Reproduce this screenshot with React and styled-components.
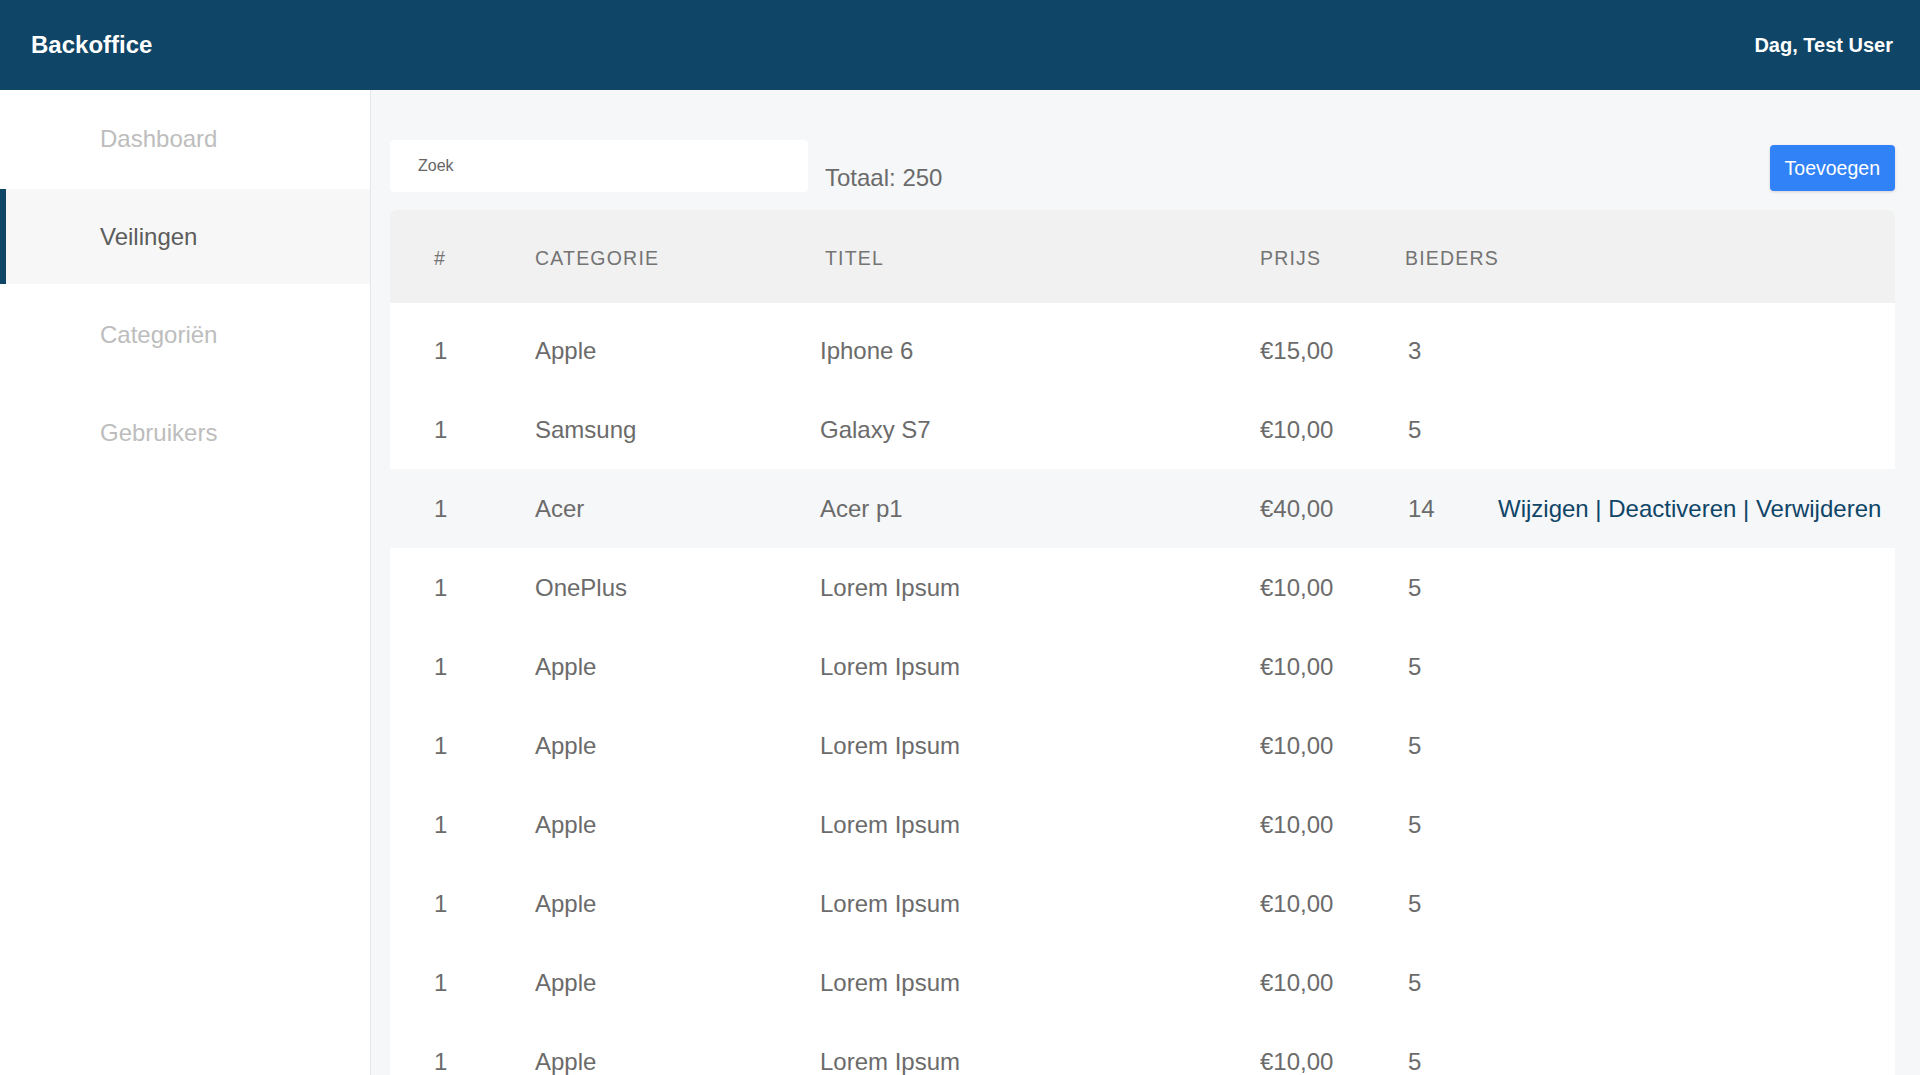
import styled, { createGlobalStyle } from "styled-components";

const GlobalStyle = createGlobalStyle`
  html, body {
    margin: 0;
    padding: 0;
  }
  body {
    font-family: "Liberation Sans", Arial, sans-serif;
    background: #f6f7f9;
  }
  * {
    box-sizing: border-box;
  }
`;

const menuItems = ["Dashboard", "Veilingen", "Categoriën", "Gebruikers"];

const auctions = [
  { id: 1, category: "Apple", title: "Iphone 6", price: "€15,00", bidders: 3 },
  { id: 1, category: "Samsung", title: "Galaxy S7", price: "€10,00", bidders: 5 },
  { id: 1, category: "Acer", title: "Acer p1", price: "€40,00", bidders: 14, hover: true },
  { id: 1, category: "OnePlus", title: "Lorem Ipsum", price: "€10,00", bidders: 5 },
  { id: 1, category: "Apple", title: "Lorem Ipsum", price: "€10,00", bidders: 5 },
  { id: 1, category: "Apple", title: "Lorem Ipsum", price: "€10,00", bidders: 5 },
  { id: 1, category: "Apple", title: "Lorem Ipsum", price: "€10,00", bidders: 5 },
  { id: 1, category: "Apple", title: "Lorem Ipsum", price: "€10,00", bidders: 5 },
  { id: 1, category: "Apple", title: "Lorem Ipsum", price: "€10,00", bidders: 5 },
  { id: 1, category: "Apple", title: "Lorem Ipsum", price: "€10,00", bidders: 5 },
];

function App() {
  return (
    <>
      <GlobalStyle />
      <Page>
        <TopBar>
          <Brand>Backoffice</Brand>
          <Greeting>Dag, Test User</Greeting>
        </TopBar>
        <Body>
          <Sidebar>
            {menuItems.map((item) => (
              <MenuItem key={item} $active={item === "Veilingen"}>
                {item}
              </MenuItem>
            ))}
          </Sidebar>
          <Main>
            <Toolbar>
              <Search placeholder="Zoek" />
              <Total>Totaal: 250</Total>
              <AddButton>Toevoegen</AddButton>
            </Toolbar>
            <Table>
              <HeadRow>
                <HeadCell>#</HeadCell>
                <HeadCell>Categorie</HeadCell>
                <HeadCell $shift={5}>Titel</HeadCell>
                <HeadCell>Prijs</HeadCell>
                <HeadCell $shift={-3}>Bieders</HeadCell>
                <HeadCell />
              </HeadRow>
              <Rows>
                {auctions.map((a, i) => (
                  <Row key={i} $hover={a.hover}>
                    <Cell>{a.id}</Cell>
                    <Cell>{a.category}</Cell>
                    <Cell>{a.title}</Cell>
                    <Cell>{a.price}</Cell>
                    <Cell>{a.bidders}</Cell>
                    <Cell>
                      {a.hover && (
                        <Actions>
                          <ActionLink>Wijzigen</ActionLink> | <ActionLink>Deactiveren</ActionLink> |{" "}
                          <ActionLink>Verwijderen</ActionLink>
                        </Actions>
                      )}
                    </Cell>
                  </Row>
                ))}
              </Rows>
            </Table>
          </Main>
        </Body>
      </Page>
    </>
  );
}

const Page = styled.div`
  height: 100vh;
  display: flex;
  flex-direction: column;
  overflow: hidden;
`;

const TopBar = styled.header`
  height: 90px;
  flex-shrink: 0;
  background: #0f4567;
  color: #fff;
  display: flex;
  align-items: center;
  justify-content: space-between;
  padding: 0 27px 0 31px;
`;

const Brand = styled.h1`
  margin: 0;
  font-size: 24px;
  font-weight: 700;
`;

const Greeting = styled.span`
  font-size: 20px;
  font-weight: 700;
`;

const Body = styled.div`
  flex: 1;
  display: flex;
  min-height: 0;
`;

const Sidebar = styled.nav`
  width: 371px;
  flex-shrink: 0;
  background: #fff;
  border-right: 1px solid #e6e6e6;
  display: flex;
  flex-direction: column;
  gap: 3px;
  padding-top: 1px;
`;

const MenuItem = styled.div`
  height: 95px;
  flex-shrink: 0;
  display: flex;
  align-items: center;
  padding-left: 94px;
  font-size: 24px;
  border-left: 6px solid ${(p) => (p.$active ? "#0f4567" : "transparent")};
  background: ${(p) => (p.$active ? "#f7f7f7" : "transparent")};
  color: ${(p) => (p.$active ? "#5c5c5c" : "#bdbdbd")};
`;

const Main = styled.main`
  flex: 1;
  display: flex;
  flex-direction: column;
  padding: 50px 25px 0 19px;
  background: #f6f7f9;
  min-width: 0;
  overflow: hidden;
`;

const Toolbar = styled.div`
  display: flex;
  align-items: flex-end;
  flex-shrink: 0;
  margin-bottom: 18px;
`;

const Search = styled.input`
  width: 418px;
  height: 52px;
  border: none;
  border-radius: 4px;
  background: #fff;
  padding: 0 28px;
  font-family: inherit;
  font-size: 16px;
  color: #555;
  outline: none;
  &::placeholder {
    color: #666;
  }
`;

const Total = styled.span`
  margin-left: 17px;
  font-size: 24px;
  color: #6b6b6b;
`;

const AddButton = styled.button`
  margin-left: auto;
  margin-bottom: 1px;
  height: 46px;
  padding: 0 15px;
  border: none;
  border-radius: 4px;
  background: #3182f6;
  color: #fff;
  font-family: inherit;
  font-size: 19.5px;
  box-shadow: 0 1px 3px rgba(0, 0, 0, 0.15);
`;

const Table = styled.div`
  flex: 1;
  display: flex;
  flex-direction: column;
  background: #fff;
  border-radius: 6px 6px 0 0;
  overflow: hidden;
`;

const grid = `
  display: grid;
  grid-template-columns: 101px 285px 440px 148px 90px 1fr;
  align-items: center;
  padding-left: 44px;
  flex-shrink: 0;
`;

const HeadRow = styled.div`
  ${grid}
  height: 93px;
  padding-top: 4px;
  background: #f1f1f1;
`;

const HeadCell = styled.div`
  font-size: 19.5px;
  letter-spacing: 1.2px;
  text-transform: uppercase;
  color: #747474;
  padding-left: ${(p) => Math.max(p.$shift || 0, 0)}px;
  margin-left: ${(p) => Math.min(p.$shift || 0, 0)}px;
`;

const Rows = styled.div`
  flex-shrink: 0;
  padding-top: 8px;
`;

const Row = styled.div`
  ${grid}
  height: 79px;
  background: ${(p) => (p.$hover ? "#f6f7f9" : "#fff")};
`;

const Cell = styled.div`
  font-size: 24px;
  color: #6b6b6b;
  white-space: nowrap;
`;

const Actions = styled.span`
  color: #0f4567;
`;

const ActionLink = styled.a`
  color: #0f4567;
  cursor: pointer;
`;

export default App;
